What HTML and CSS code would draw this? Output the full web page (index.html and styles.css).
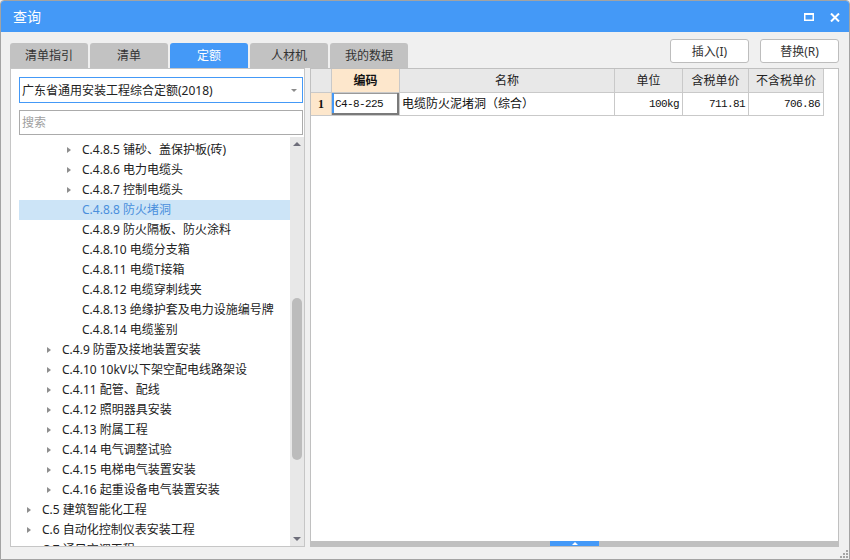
FILE: index.html
```html
<!DOCTYPE html>
<html lang="zh">
<head>
<meta charset="utf-8">
<title>查询</title>
<link rel="stylesheet" href="styles.css">
</head>
<body>
<div class="window">
  <div class="titlebar">
    <span class="title">查询</span>
    <div class="tb-icons">
      <svg width="10" height="8" viewBox="0 0 10 8"><rect x="0.75" y="1" width="8.5" height="6.25" fill="none" stroke="#fff" stroke-width="1.5"/><rect x="0" y="0" width="10" height="2" fill="#fff"/></svg>
      <svg width="10" height="9" viewBox="0 0 10 9"><path d="M1 0.5 L9 8.5 M9 0.5 L1 8.5" stroke="#fff" stroke-width="2"/></svg>
    </div>
  </div>

  <div class="toolbar">
    <div class="tabs">
      <div class="tab">清单指引</div>
      <div class="tab">清单</div>
      <div class="tab active">定额</div>
      <div class="tab">人材机</div>
      <div class="tab">我的数据</div>
    </div>
    <div class="buttons">
      <button class="btn">插入(I)</button>
      <button class="btn">替换(R)</button>
    </div>
  </div>

  <div class="main">
    <div class="left">
      <div class="select"><span>广东省通用安装工程综合定额(2018)</span><i class="caret"></i></div>
      <div class="search">搜索</div>
      <div class="treewrap">
        <div class="tree">
          <div class="node l3"><span class="tw has"></span>C.4.8.5 铺砂、盖保护板(砖)</div>
          <div class="node l3"><span class="tw has"></span>C.4.8.6 电力电缆头</div>
          <div class="node l3"><span class="tw has"></span>C.4.8.7 控制电缆头</div>
          <div class="node l3 sel"><span class="tw"></span>C.4.8.8 防火堵洞</div>
          <div class="node l3"><span class="tw"></span>C.4.8.9 防火隔板、防火涂料</div>
          <div class="node l3"><span class="tw"></span>C.4.8.10 电缆分支箱</div>
          <div class="node l3"><span class="tw"></span>C.4.8.11 电缆T接箱</div>
          <div class="node l3"><span class="tw"></span>C.4.8.12 电缆穿刺线夹</div>
          <div class="node l3"><span class="tw"></span>C.4.8.13 绝缘护套及电力设施编号牌</div>
          <div class="node l3"><span class="tw"></span>C.4.8.14 电缆鉴别</div>
          <div class="node l2"><span class="tw has"></span>C.4.9 防雷及接地装置安装</div>
          <div class="node l2"><span class="tw has"></span>C.4.10 10kV以下架空配电线路架设</div>
          <div class="node l2"><span class="tw has"></span>C.4.11 配管、配线</div>
          <div class="node l2"><span class="tw has"></span>C.4.12 照明器具安装</div>
          <div class="node l2"><span class="tw has"></span>C.4.13 附属工程</div>
          <div class="node l2"><span class="tw has"></span>C.4.14 电气调整试验</div>
          <div class="node l2"><span class="tw has"></span>C.4.15 电梯电气装置安装</div>
          <div class="node l2"><span class="tw has"></span>C.4.16 起重设备电气装置安装</div>
          <div class="node l1"><span class="tw has"></span>C.5 建筑智能化工程</div>
          <div class="node l1"><span class="tw has"></span>C.6 自动化控制仪表安装工程</div>
          <div class="node l1"><span class="tw has"></span>C.7 通风空调工程</div>
        </div>
        <div class="vscroll">
          <div class="sb-btn"><i class="arr-up"></i></div>
          <div class="track"><div class="thumb"></div></div>
          <div class="sb-btn"><i class="arr-down"></i></div>
        </div>
      </div>
    </div>

    <div class="right">
      <div class="grid-area">
        <div class="grid">
          <div class="hc rn"></div>
          <div class="hc code">编码</div>
          <div class="hc">名称</div>
          <div class="hc">单位</div>
          <div class="hc">含税单价</div>
          <div class="hc">不含税单价</div>

          <div class="dc rn">1</div>
          <div class="dc mono cur">C4-8-225</div>
          <div class="dc name">电缆防火泥堵洞（综合）</div>
          <div class="dc mono num">100kg</div>
          <div class="dc mono num">711.81</div>
          <div class="dc mono num">706.86</div>
        </div>
      </div>
      <div class="hsplit"><div class="handle"><i class="arr-mini"></i></div></div>
    </div>
  </div>
  <div class="statusbar"></div>
  <svg class="grip" width="8" height="8" viewBox="0 0 8 8" fill="#a6a6a6">
    <rect x="6" y="0" width="2" height="2"/>
    <rect x="3" y="3" width="2" height="2"/><rect x="6" y="3" width="2" height="2"/>
    <rect x="0" y="6" width="2" height="2"/><rect x="3" y="6" width="2" height="2"/><rect x="6" y="6" width="2" height="2"/>
  </svg>
</div>
</body>
</html>
```

FILE: styles.css
```css
* { box-sizing: border-box; }
html, body { margin: 0; padding: 0; background: #f0f0f0; }
body {
  font-family: "Noto Sans", "Noto Sans CJK SC", sans-serif;
  font-size: 12px;
  color: #222;
}
.window {
  position: relative;
  width: 850px;
  height: 560px;
  border: 1px solid #a3a3a3;
  border-radius: 4px 4px 0 0;
  background: #f0f0f0;
  display: flex;
  flex-direction: column;
  overflow: hidden;
}
.titlebar {
  height: 31px;
  flex: none;
  background: #4499f7;
  color: #fff;
  display: flex;
  align-items: center;
  justify-content: space-between;
  padding: 0 9px 0 12px;
}
.title { font-size: 14px; line-height: 20px; padding-top: 1px; }
.tb-icons { display: flex; align-items: center; gap: 16px; padding-top: 1px; }
.tb-icons svg { display: block; }

.toolbar {
  height: 36px;
  flex: none;
  display: flex;
  justify-content: space-between;
  padding: 0 10px 0 9px;
}
.tabs { display: flex; gap: 2px; align-self: flex-end; }
.tab {
  width: 78px;
  height: 25px;
  line-height: 25px;
  text-align: center;
  background: #c2c2c2;
  color: #333;
  border-radius: 3px 3px 0 0;
  font-size: 12px;
}
.tab.active { background: #4499f7; color: #fff; }
.buttons { display: flex; gap: 11px; padding-top: 7px; }
.btn {
  width: 79px;
  height: 24px;
  background: #fff;
  border: 1px solid #bdbdbd;
  border-radius: 3px;
  font-family: inherit;
  font-size: 12px;
  color: #333;
  padding: 0;
}

.main {
  flex: 1;
  display: flex;
  gap: 5px;
  padding: 0 10px 0 9px;
  min-height: 0;
}
.left {
  width: 295px;
  flex: none;
  background: #fff;
  border: 1px solid #c6c6c6;
  display: flex;
  flex-direction: column;
  min-height: 0;
}
.select {
  margin: 8px 0 0 8px;
  width: 284px;
  height: 26px;
  border: 1px solid #4499f7;
  display: flex;
  align-items: center;
  padding-left: 2px;
  font-size: 12px;
  color: #222;
}
.caret {
  margin-left: auto;
  margin-right: 5px;
  width: 0; height: 0;
  border-left: 3px solid transparent;
  border-right: 3px solid transparent;
  border-top: 3px solid #8c8c8c;
}
.search {
  margin: 7px 0 0 8px;
  width: 284px;
  height: 25px;
  border: 1px solid #ababab;
  padding-left: 2px;
  line-height: 23px;
  color: #a0a0a0;
}
.treewrap {
  flex: 1;
  margin: 2px 0 0 8px;
  display: flex;
  min-height: 0;
  overflow: hidden;
}
.tree { flex: 1; padding-top: 3px; overflow: hidden; }
.node {
  height: 20px;
  line-height: 20px;
  white-space: nowrap;
  color: #222;
  display: flex;
  align-items: center;
}
.node.l1 { padding-left: 8px; }
.node.l2 { padding-left: 28px; }
.node.l3 { padding-left: 48px; }
.tw { width: 15px; flex: none; height: 20px; display: flex; align-items: center; }
.tw.has::before {
  content: "";
  width: 0; height: 0;
  border-left: 4px solid #8e8e8e;
  border-top: 3.5px solid transparent;
  border-bottom: 3.5px solid transparent;
}
.node.sel { background: #cce4f7; color: #4a8fdc; }

.vscroll {
  width: 14px;
  flex: none;
  background: #e8e8e8;
  display: flex;
  flex-direction: column;
}
.sb-btn { height: 14px; flex: none; display: flex; justify-content: center; align-items: center; }
.arr-up { width: 0; height: 0; border-left: 4px solid transparent; border-right: 4px solid transparent; border-bottom: 4px solid #6e6e7a; }
.arr-down { width: 0; height: 0; border-left: 4px solid transparent; border-right: 4px solid transparent; border-top: 4px solid #6e6e7a; }
.track { flex: 1; padding: 0 2px; }
.thumb { margin-top: 147px; height: 162px; background: #bcbcbc; border-radius: 5px; }

.right {
  flex: 1;
  background: #fff;
  border: 1px solid #c0c0c0;
  display: flex;
  flex-direction: column;
  min-width: 0;
}
.grid-area { flex: 1; }
.grid {
  display: grid;
  grid-template-columns: 21px 68px 215px 68px 66px 75px;
  grid-template-rows: 24px 23px;
  width: max-content;
}
.hc, .dc {
  border-right: 1px solid #c9c9c9;
  border-bottom: 1px solid #c9c9c9;
  white-space: nowrap;
  overflow: hidden;
}
.hc {
  background: #e8e8e8;
  text-align: center;
  line-height: 23px;
  color: #222;
}
.hc.code { background: #fde7cc; font-weight: bold; color: #111; }
.dc { line-height: 22px; color: #111; }
.dc.rn {
  background: #fde7cc;
  text-align: center;
  font-family: "Liberation Serif", serif;
  font-weight: bold;
  font-size: 12px;
}
.dc.mono {
  font-family: "Liberation Mono", "DejaVu Sans Mono", monospace;
  font-size: 11px;
  letter-spacing: -0.6px;
}
.dc.cur {
  padding-left: 3px;
  box-shadow: inset -2px -2px 0 #7a7a7a, inset 2px 0 0 #4499f7, inset 0 1px 0 #9a9a9a;
}
.dc.name { padding-left: 2px; font-size: 12px; }
.dc.num { text-align: right; padding-right: 3px; }

.hsplit { height: 5px; flex: none; background: #c0c0c0; display: flex; }
.handle {
  margin-left: 239px;
  width: 49px;
  background: #4499f7;
  display: flex;
  justify-content: center;
  align-items: center;
}
.arr-mini { width: 0; height: 0; border-left: 3px solid transparent; border-right: 3px solid transparent; border-bottom: 3px solid #fff; }

.statusbar { height: 12px; flex: none; }
.grip { position: absolute; right: 1px; bottom: 1px; display: block; }
```
